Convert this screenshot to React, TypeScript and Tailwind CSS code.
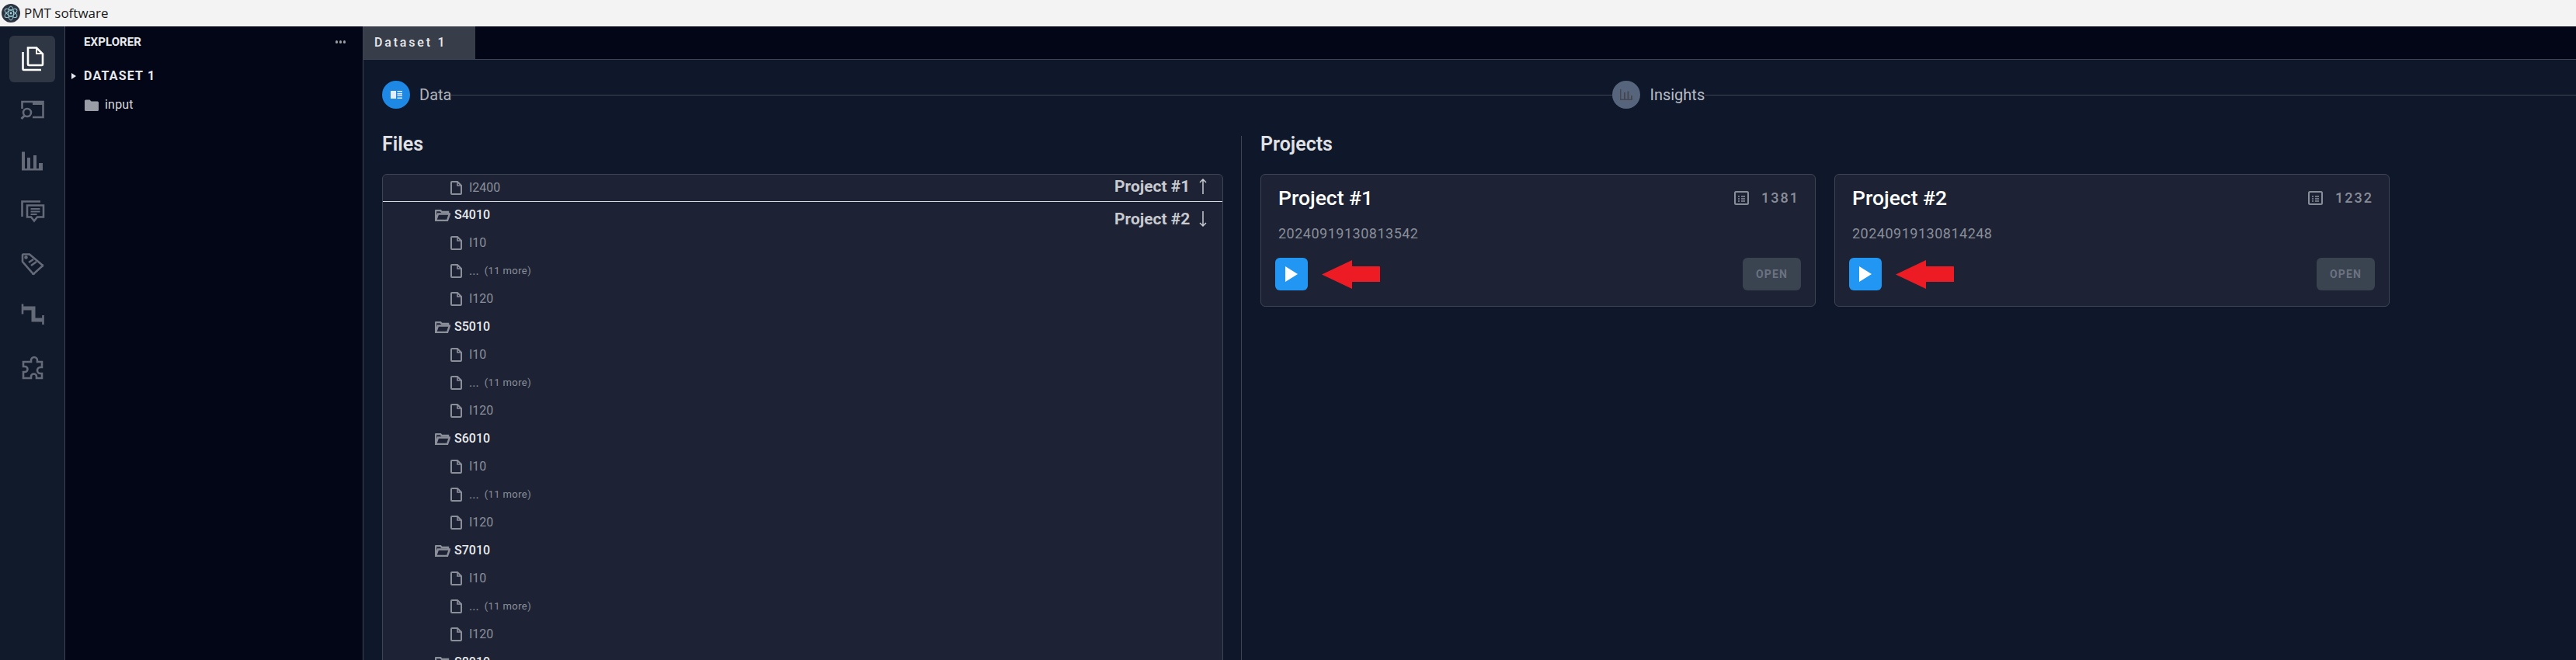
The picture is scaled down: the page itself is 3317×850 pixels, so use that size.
import { ReactNode } from "react";

const FONT = "font-['Roboto',sans-serif]";

function Logo() {
  return (
    <svg width="24" height="24" viewBox="0 0 24 24" className="shrink-0" fill="none">
      <circle cx="12" cy="12" r="12" fill="#2b3440" />
      <g stroke="#9fd8e4" strokeWidth="0.9">
        <ellipse cx="12" cy="12" rx="9" ry="3.6" transform="rotate(30 12 12)" />
        <ellipse cx="12" cy="12" rx="9" ry="3.6" transform="rotate(90 12 12)" />
        <ellipse cx="12" cy="12" rx="9" ry="3.6" transform="rotate(150 12 12)" />
      </g>
      <circle cx="12" cy="12" r="1.4" fill="#9fd8e4" />
    </svg>
  );
}

function SideIcon({ children, active }: { children: ReactNode; active?: boolean }) {
  return (
    <div
      className={
        active
          ? "w-[59px] h-[60px] rounded-md bg-[#2f3744] flex items-center justify-center text-white"
          : "w-[59px] h-[60px] rounded-md flex items-center justify-center text-[#646a77]"
      }
    >
      <svg width="32" height="32" viewBox="0 0 32 32" fill="none" stroke="currentColor" strokeWidth="2.6" className="overflow-visible">
        {children}
      </svg>
    </div>
  );
}

function FileIcon() {
  return (
    <svg width="15" height="18" viewBox="0 0 15 18" fill="none" stroke="#8b8f9a" strokeWidth="2" className="shrink-0">
      <path d="M1 2a1 1 0 0 1 1-1h7l5 5v10a1 1 0 0 1-1 1H2a1 1 0 0 1-1-1z" />
      <path d="M9 1v5h5" strokeWidth="1.6" />
    </svg>
  );
}

function FolderOpenIcon() {
  return (
    <svg width="20" height="15" viewBox="0 0 20 15" fill="none" stroke="#8b8f9a" strokeWidth="2.4" className="shrink-0">
      <path d="M1 13V2a1 1 0 0 1 1-1h5l2 2h8v2" />
      <path d="M1 14h15l3-8.500H4L1 14z" />
    </svg>
  );
}

function DocIcon() {
  return (
    <svg width="19" height="18" viewBox="0 0 19 18" fill="none" stroke="#8a8e99" strokeWidth="2" className="shrink-0">
      <rect x="1" y="1" width="17" height="16" rx="1.500" />
      <path d="M5 7h2M9 7h5M5 10h2M9 10h5M5 13h2M9 13h5" strokeWidth="1.500" />
    </svg>
  );
}

function FileRow({ name, more }: { name: string; more?: boolean }) {
  return (
    <div className="h-9 flex items-center gap-[9px] pl-[87px]">
      <FileIcon />
      <span className="text-base text-[#8b8f9a]">{name}</span>
      {more && <span className="text-[13px] text-[#8b8f9a] -ml-[2px] tracking-[0.4px]">(11 more)</span>}
    </div>
  );
}

function FolderRow({ name }: { name: string }) {
  return (
    <div className="h-9 flex items-center gap-[5px] pl-[67px]">
      <FolderOpenIcon />
      <span className="text-base font-medium text-[#e8e9ec]">{name}</span>
    </div>
  );
}

function RedArrow() {
  return (
    <svg width="75" height="37" viewBox="0 0 75 37" fill="#ed1c24">
      <path d="M0 18.500 39 0v8h35a1 1 0 0 1 1 1v19H39v9z" />
    </svg>
  );
}

function SortLabel({ name, up, className }: { name: string; up?: boolean; className: string }) {
  return (
    <div className={`absolute right-[20px] flex items-center ${className}`}>
      <span className="w-[109px] text-[21px] leading-[28px] font-bold text-[#c8cad0]">{name}</span>
      <svg width="10" height="20" viewBox="0 0 10 20" fill="none" stroke="#c8cad0" strokeWidth="1.500">
        {up ? <path d="M5 20V1M1 5l4-4 4 4" /> : <path d="M5 0v19M1 15l4 4 4-4" />}
      </svg>
    </div>
  );
}

function ProjectCard({ name, stamp, count }: { name: string; stamp: string; count: string }) {
  return (
    <div className="w-[715px] h-[171px] rounded-md border border-[#3d4452] bg-[#1d2334] px-[18px] pt-[15px]">
      <div className="flex items-center justify-between h-[30px] pl-[4px]">
        <span className="text-[26.500px] font-medium text-white">{name}</span>
        <div className="flex items-center gap-4 text-[#8a8e99] pr-[2px]">
          <DocIcon />
          <span className="text-lg font-medium tracking-[2px]">{count}</span>
        </div>
      </div>
      <div className="mt-[18px] pl-[4px] text-lg leading-[26px] text-[#8a8e99] tracking-[0.5px]">{stamp}</div>
      <div className="mt-[18px] flex items-center justify-between">
        <div className="flex items-center gap-[18px]">
          <div className="w-[42px] h-[42px] rounded-md bg-[#2196f3] flex items-center justify-center">
            <svg width="16" height="20" viewBox="0 0 16 20" fill="white">
              <path d="M0 0l16 10L0 20z" />
            </svg>
          </div>
          <RedArrow />
        </div>
        <div className="w-[75px] h-[42px] rounded-md bg-[#3a4350] flex items-center justify-center text-sm font-bold tracking-[1.2px] text-[#6b7280]">
          OPEN
        </div>
      </div>
    </div>
  );
}

const groups = ["S4010", "S5010", "S6010", "S7010"];

export default function App() {
  return (
    <div className={`h-screen w-full overflow-hidden flex flex-col ${FONT}`}>
      <div className="h-[34px] shrink-0 bg-[#f3f3f3] flex items-center gap-[5px] pl-[2px] text-[17px] text-[#1a1a1a] font-['Open_Sans',sans-serif]">
        <Logo />
        <span>PMT software</span>
      </div>

      <div className="flex-1 flex min-h-0">
        {/* activity bar */}
        <div className="w-[84px] shrink-0 bg-[#111a2b] border-r border-[#3d4452] flex flex-col items-center gap-[6.300px] pt-[12px]">
          <SideIcon active>
            <path d="M3.500 7v22a1 1 0 0 0 1 1H27" />
            <path d="M10 1.500h11l8 8V23a1 1 0 0 1-1 1H11a1 1 0 0 1-1-1z" />
            <path d="M21 2v7h8" strokeWidth="2" />
          </SideIcon>
          <SideIcon>
            <path d="M2.500 14V5h27v20H16" />
            <path d="M16 4h14v5H16z" fill="currentColor" stroke="none" />
            <circle cx="9" cy="19" r="5" />
            <path d="M5.500 23l-4 4" strokeWidth="3" />
          </SideIcon>
          <SideIcon>
            <path
              d="M2 2.500h4V24h3V10h4v14h4V7h4v17h3v-7h5v9.500H2z"
              fill="currentColor"
              stroke="none"
            />
          </SideIcon>
          <SideIcon>
            <path d="M2.500 20V.5H26" />
            <path d="M9 5.500h21v15h-8l-4 5-4-5H9z" />
            <path d="M13.500 10h12M13.500 13.500h12M13.500 17h8" strokeWidth="2" />
          </SideIcon>
          <SideIcon>
            <path d="M3 3.500a1 1 0 0 1 1-1h8l16 13.500a1 1 0 0 1 0 2L18 27a1 1 0 0 1-2 0L3 12z" />
            <circle cx="7.500" cy="6.500" r="1" fill="currentColor" />
            <path d="M11 13l6-4M14 17l7-5" />
          </SideIcon>
          <SideIcon>
            <path d="M3 6h14v15h12" strokeWidth="5" />
            <path d="M3 .5v13M29.500 15v12" />
          </SideIcon>
          <SideIcon>
            <path d="M14 6a4 4 0 0 1 8 0v2h6v7h-2a3.500 3.500 0 0 0 0 8h2v6h-7v-2a3.500 3.500 0 0 0-7 0v2H4v-8h2a3.500 3.500 0 0 0 0-7H4V8h10z" />
          </SideIcon>
        </div>

        {/* explorer */}
        <div className="w-[384px] shrink-0 bg-[#020617] border-r border-[#3d4452] pl-[24px] pr-[22px]">
          <div className="h-[40px] flex items-center justify-between">
            <span className="text-[15px] font-bold text-[#e8e9ec] leading-none tracking-[0.1px]">EXPLORER</span>
            <div className="flex gap-[1.500px]">
              <span className="w-[3.500px] h-[3.500px] rounded-full bg-[#9a9da6]" />
              <span className="w-[3.500px] h-[3.500px] rounded-full bg-[#9a9da6]" />
              <span className="w-[3.500px] h-[3.500px] rounded-full bg-[#9a9da6]" />
            </div>
          </div>
          <div className="relative mt-[6px] h-[36px] flex items-center text-base font-bold text-[#e8e9ec] tracking-[1.200px]">
            <svg width="6" height="8" viewBox="0 0 6 8" fill="#e8e9ec" className="absolute -left-[16px] top-[14px]">
              <path d="M0 0l6 4-6 4z" />
            </svg>
            DATASET 1
          </div>
          <div className="mt-[1px] h-[36px] flex items-center gap-[8px] pl-[1px]">
            <svg width="18" height="15" viewBox="0 0 18 15" fill="#9a9da6">
              <path d="M0 2a1.500 1.500 0 0 1 1.500-1.500h5l2 2h8A1.500 1.500 0 0 1 18 4v9.500a1.500 1.500 0 0 1-1.500 1.500h-15A1.500 1.500 0 0 1 0 13.500z" />
            </svg>
            <span className="text-base text-[#d5d7dc] tracking-[0.2px]">input</span>
          </div>
        </div>

        {/* main */}
        <div className="flex-1 min-w-0 flex flex-col">
          <div className="h-[43px] shrink-0 bg-[#020617] border-b border-[#3d4452] flex">
            <div className="w-[144px] h-[42px] bg-[#383d4a] pl-[14px] flex items-center text-base font-medium text-[#e8e9ec] tracking-[2.800px]">
              Dataset 1
            </div>
          </div>

          <div className="flex-1 min-h-0 bg-[#0f172a] pl-[24px]">
            {/* stepper */}
            <div className="h-[36px] mt-[27px] flex items-center">
              <div className="w-9 h-9 rounded-full bg-[#1e88e5] flex items-center justify-center">
                <svg width="15" height="12" viewBox="0 0 15 12" fill="#e3eefa">
                  <path d="M0 1h7v10H0zM8.500 1H15v1.500H8.500zM8.500 4H15v1.500H8.500zM8.500 6.500H15V8H8.500zM8.500 9.500H15V11H8.500z" />
                </svg>
              </div>
              <span className="ml-3 text-xl text-[#b0b3bb]">Data</span>
              <div className="w-[1495px] h-px bg-[#3d4452]" />
              <div className="w-9 h-9 rounded-full bg-[#56657c] flex items-center justify-center">
                <svg width="16" height="14" viewBox="0 0 16 14" fill="#454850">
                  <path d="M0 0h1.500v14H0zM5 4h2v10H5zM9.500 2.500h2V14h-2zM14 8h2v6h-2zM0 12.500h16V14H0z" />
                </svg>
              </div>
              <span className="ml-3 text-xl text-[#b9bcc4]">Insights</span>
              <div className="flex-1 h-px bg-[#3d4452]" />
            </div>

            <div className="flex mt-[35px] h-[700px]">
              {/* files */}
              <div className="w-[1083px] shrink-0">
                <div className="h-[22px] text-[25px] leading-[22px] font-semibold text-[#e0e1e5]">Files</div>
                <div className="relative mt-[27px] h-[700px] rounded-md border border-[#3d4452] bg-[#1d2334]">
                  <div className="h-[35px] border-b border-[#d8dade] flex items-center gap-[9px] pl-[87px] -mb-px">
                    <FileIcon />
                    <span className="text-base text-[#8b8f9a]">I2400</span>
                  </div>
                  <SortLabel name="Project #1" up className="top-[1px]" />
                  <SortLabel name="Project #2" className="top-[43px]" />
                  {groups.map((g) => (
                    <div key={g}>
                      <FolderRow name={g} />
                      <FileRow name="I10" />
                      <FileRow name="..." more />
                      <FileRow name="I120" />
                    </div>
                  ))}
                  <FolderRow name="S8010" />
                </div>
              </div>

              {/* projects */}
              <div className="ml-[23px] pl-[24px] border-l border-[#3d4452] flex-1">
                <div className="h-[22px] text-[25px] leading-[22px] font-semibold text-[#e0e1e5]">Projects</div>
                <div className="mt-[27px] flex gap-6">
                  <ProjectCard name="Project #1" stamp="20240919130813542" count="1381" />
                  <ProjectCard name="Project #2" stamp="20240919130814248" count="1232" />
                </div>
              </div>
            </div>
          </div>
        </div>
      </div>
    </div>
  );
}
